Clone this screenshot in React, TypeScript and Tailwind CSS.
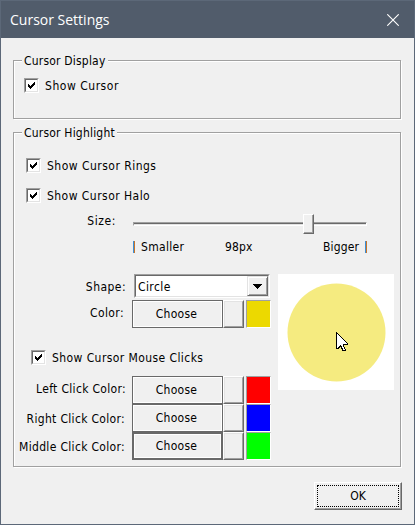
import React from "react";

const FONT = "font-['DejaVu_Sans_Condensed','DejaVu_Sans',sans-serif] [font-stretch:condensed]";

function Label({ text, className = "" }: { text: string; className?: string }) {
  return <span className={`block whitespace-nowrap leading-[16px] ${className}`}>{text}</span>;
}

function Group({ title, className, titleClass, children }: { title: string; className: string; titleClass: string; children: React.ReactNode }) {
  return (
    <section className={`box-border w-[388px] border border-[#a0a0a0] shadow-[1px_1px_0_#fff,inset_1px_1px_0_#fff] ${className}`}>
      <div className="-mt-[8px] ml-[8px] h-[16px] w-fit bg-[#f0f0f0] pr-[2px] pl-[2px]">
        <Label text={title} className={titleClass} />
      </div>
      {children}
    </section>
  );
}

function Check({ text, className, textClass = "" }: { text: string; className: string; textClass?: string }) {
  return (
    <div className={`flex h-[15px] items-start gap-[6px] ${className}`}>
      <span className="box-border block size-[15px] shrink-0 border border-t-[#a0a0a0] border-r-white border-b-white border-l-[#a0a0a0]">
        <span className="box-border block size-[13px] border border-t-[#696969] border-r-[#e3e3e3] border-b-[#e3e3e3] border-l-[#696969] bg-white">
          <svg width="11" height="11" viewBox="0 0 11 11" shapeRendering="crispEdges" className="block">
            <path d="M2 4h1v3h-1zM3 5h1v3h-1zM4 6h1v3h-1zM5 5h1v3h-1zM6 4h1v3h-1zM7 3h1v3h-1zM8 2h1v3h-1z" fill="#000" />
          </svg>
        </span>
      </span>
      <Label text={text} className={textClass} />
    </div>
  );
}

function ColorRow({ label, labelClass, swatch, focused = false }: { label: string; labelClass: string; swatch: string; focused?: boolean }) {
  return (
    <div className="flex h-[28px] items-start">
      <div className="flex w-[118px] shrink-0 justify-end">
        <Label text={label} className={labelClass} />
      </div>
      <button
        className={`box-border flex h-[28px] w-[91px] shrink-0 justify-center border-[#696969] pr-[2px] shadow-[inset_0_0_0_1px_#fff] ${
          focused ? "border-2 pt-[4px]" : "border pt-[5px]"
        }`}
      >
        <Label text="Choose" className="tracking-[0.3px]" />
      </button>
      <button className="box-border block h-[28px] w-[21px] shrink-0 border border-t-white border-r-[#696969] border-b-[#696969] border-l-white">
        <span className="box-border block h-[26px] w-[19px] border border-t-[#e3e3e3] border-r-[#a0a0a0] border-b-[#a0a0a0] border-l-[#e3e3e3]" />
      </button>
      <span className={`ml-[2px] box-border block h-[28px] w-[25px] shrink-0 border border-t-[#a0a0a0] border-r-white border-b-white border-l-[#a0a0a0] ${swatch}`} />
    </div>
  );
}

function Tick() {
  return (
    <span className="flex h-[12px] w-[2px] shrink-0">
      <span className="w-px bg-[#3c8fd6]" />
      <span className="w-px bg-[#c8752a]" />
    </span>
  );
}

export default function App() {
  return (
    <main className={`box-border h-[525px] w-[415px] overflow-hidden border border-[#5c6878] bg-[#f0f0f0] text-[12px] text-black ${FONT}`}>
      <header className="flex h-[37px] items-center justify-between bg-[#515c6b] pr-[15px] pl-[9px]">
        <h1 className="font-['Open_Sans',sans-serif] text-[14px] leading-[20px] font-normal whitespace-nowrap text-white [font-stretch:normal]">Cursor Settings</h1>
        <svg width="12" height="12" viewBox="0 0 12 12" className="block">
          <path d="M.3.3l11.4 11.4M11.7.3L.3 11.7" stroke="#fff" strokeWidth="1.1" />
        </svg>
      </header>

      <div className="flex flex-col pl-[12px]">
        <Group title="Cursor Display" titleClass="tracking-[0.2px]" className="mt-[22px] h-[59px]">
          <Check text="Show Cursor" textClass="tracking-[0.53px]" className="mt-[9px] ml-[10px]" />
        </Group>

        <Group title="Cursor Highlight" titleClass="tracking-[0.2px]" className="mt-[13px] h-[335px]">
          <Check text="Show Cursor Rings" textClass="tracking-[0.48px]" className="mt-[17px] ml-[12px]" />
          <Check text="Show Cursor Halo" textClass="tracking-[0.46px]" className="mt-[15px] ml-[12px]" />

          <div className="mt-[10px] flex h-[20px] items-start">
            <div className="flex w-[102px] justify-end">
              <Label text="Size:" className="tracking-[0.6px]" />
            </div>
            <div className="mt-px ml-[17px] flex h-[20px] w-[234px] items-center">
              <span className="block h-[4px] w-[170px] border-t border-b border-l border-t-[#a0a0a0] border-b-white border-l-[#a0a0a0] bg-[#e3e3e3] shadow-[inset_0_1px_0_#696969]" />
              <span className="box-border block h-[20px] w-[11px] border border-t-white border-r-[#696969] border-b-[#696969] border-l-white bg-[#f0f0f0] shadow-[inset_-1px_-1px_0_#a0a0a0]" />
              <span className="block h-[4px] w-[53px] border-t border-r border-b border-t-[#a0a0a0] border-r-white border-b-white bg-[#e3e3e3] shadow-[inset_0_1px_0_#696969]" />
            </div>
          </div>

          <div className="mt-[6px] ml-[119px] flex h-[16px] w-[234px] items-center">
            <Tick />
            <Label text="Smaller" className="ml-[6px] w-[84px] tracking-[0.3px]" />
            <Label text="98px" className="w-[98px] tracking-[0.1px]" />
            <Label text="Bigger" className="mr-auto tracking-[0.15px]" />
            <Tick />
          </div>

          <div className="mt-[19px] flex">
            <div className="w-[264px] shrink-0">
              <div className="flex h-[24px] items-start">
                <div className="flex w-[112px] justify-end pt-[5px]">
                  <Label text="Shape:" className="tracking-[0.45px]" />
                </div>
                <div className="ml-[8px] box-border h-[24px] w-[136px] border border-t-[#a0a0a0] border-r-white border-b-white border-l-[#a0a0a0]">
                  <div className="box-border flex h-[22px] justify-between border border-t-[#696969] border-r-[#e3e3e3] border-b-[#e3e3e3] border-l-[#696969] bg-white">
                    <Label text="Circle" className="mt-[3px] ml-[2px] tracking-[0.4px]" />
                    <span className="box-border flex h-[20px] w-[21px] items-center justify-center border border-t-[#e3e3e3] border-r-[#696969] border-b-[#696969] border-l-[#e3e3e3] bg-[#f0f0f0] shadow-[inset_1px_1px_0_#fff,inset_-1px_-1px_0_#a0a0a0]">
                      <svg width="9" height="5" viewBox="0 0 9 5" shapeRendering="crispEdges" className="block">
                        <path d="M0 0h9v1H0zM1 1h7v1H1zM2 2h5v1H2zM3 3h3v1H3zM4 4h1v1H4z" />
                      </svg>
                    </span>
                  </div>
                </div>
              </div>
              <div className="mt-[2px]">
                <ColorRow label="Color:" labelClass="mt-[5px] mr-[8px] tracking-[0.4px]" swatch="bg-[#ecd900]" />
              </div>
              <Check text="Show Cursor Mouse Clicks" textClass="tracking-[0.42px]" className="mt-[22px] ml-[17px]" />
              <div className="mt-[11px]">
                <ColorRow label="Left Click Color:" labelClass="mt-[5px] mr-[6px] tracking-[0.32px]" swatch="bg-[#ff0000]" />
                <ColorRow label="Right Click Color:" labelClass="mt-[7px] mr-[7px] tracking-[0.32px]" swatch="bg-[#0000ff]" />
                <ColorRow label="Middle Click Color:" labelClass="mt-[7px] mr-[7px] tracking-[0.32px]" swatch="bg-[#00ff00]" focused />
              </div>
            </div>
            <svg width="116" height="116" viewBox="0 0 116 116" className="block shrink-0 bg-white">
              <circle cx="58.5" cy="58.5" r="49" fill="#f5eb80" />
              <g shapeRendering="crispEdges" transform="translate(58 58)">
                <path d="M0 0h1v1h1v1h1v1h1v1h1v1h1v1h1v1h1v1h1v1h1v1h1v1h1v2h-4v2h1v2h1v2h-4v-2h-1v-2h-1v1h-1v1h-3z" fill="#000" />
                <path d="M1 2h1v1h1v1h1v1h1v1h1v1h1v1h1v1h1v1h1v1h1v1h-4v3h1v2h1v1h-2v-2h-1v-2h-1v-1h-1v1h-1v1h-1v1h-1z" fill="#fff" />
              </g>
            </svg>
          </div>
        </Group>

        <button className="mt-[15px] ml-[301px] box-border flex h-[28px] w-[88px] border border-t-white border-r-[#696969] border-b-[#696969] border-l-white p-[2px] shadow-[inset_-1px_-1px_0_#a0a0a0]">
          <span className="box-border flex h-[22px] w-[82px] justify-center border border-dotted border-black pt-[2px]">
            <Label text="OK" />
          </span>
        </button>
      </div>
    </main>
  );
}
